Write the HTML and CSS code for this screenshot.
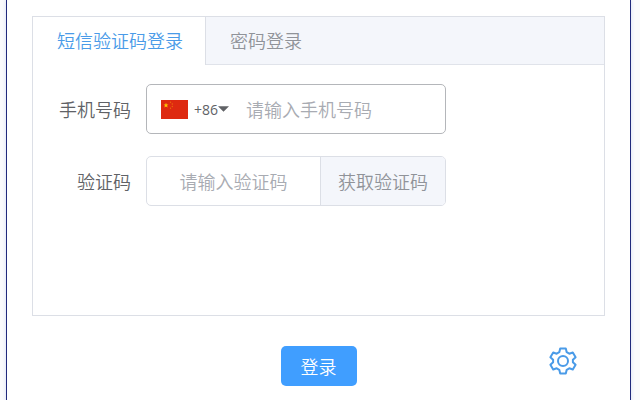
FILE: index.html
```
<!DOCTYPE html>
<html lang="zh-CN">
<head>
  <meta charset="UTF-8" />
  <meta name="viewport" content="width=device-width, initial-scale=1" />
  <title>登录</title>
  <link rel="stylesheet" href="styles.css">
</head>
<body>
  <main class="login-box">
    <section class="tabs">
      <div class="tabs-header" role="tablist">
        <button type="button" class="tab active" role="tab" aria-selected="true">短信验证码登录</button>
        <button type="button" class="tab" role="tab" aria-selected="false">密码登录</button>
      </div>
      <form class="tabs-content" id="loginForm">
        <div class="form-item">
          <label for="phone">手机号码</label>
          <div class="input-group phone-group">
            <button type="button" class="country-btn" aria-label="+86">
              <svg class="flag" viewBox="0 0 27 19">
                <rect width="27" height="19" fill="#de2910" />
                <path fill="#ffc400" d="M5 2.800l.7 1.700h1.800L6.100 5.600l.5 1.800L5 6.400 3.400 7.400l.5-1.800L2.500 4.500h1.800z" />
                <g fill="#ea6a0c">
                  <circle cx="9.500" cy="2.300" r=".7" />
                  <circle cx="11.300" cy="4" r=".7" />
                  <circle cx="11.300" cy="6.500" r=".7" />
                  <circle cx="9.500" cy="8.300" r=".7" />
                </g>
              </svg>
              <span>+86</span>
              <svg class="caret" viewBox="0 0 12 6"><path d="M0 0h12L6 6z" fill="#606266" /></svg>
            </button>
            <input type="tel" id="phone" placeholder="请输入手机号码" />
          </div>
        </div>
        <div class="form-item">
          <label for="code">验证码</label>
          <div class="input-group">
            <input type="text" id="code" class="code-input" placeholder="请输入验证码" />
            <button type="button" class="code-btn">获取验证码</button>
          </div>
        </div>
      </form>
    </section>
    <footer class="login-footer">
      <button type="submit" form="loginForm" class="login-btn">登录</button>
      <button type="button" class="setting-btn" aria-label="设置">
        <svg viewBox="0 0 28 28" fill="none" stroke="#4a9be8" stroke-width="2" stroke-linejoin="round">
          <path d="M11.200 1.500h5.600l.9 3.700 2.600 1.500 3.500-1.200 2.800 4.800-2.700 2.500v2.400l2.700 2.500-2.800 4.800-3.500-1.200-2.600 1.500-.9 3.700h-5.600l-.9-3.700-2.600-1.500-3.500 1.200-2.800-4.800 2.700-2.500v-2.400l-2.700-2.500 2.800-4.800 3.500 1.200 2.600-1.500z" />
          <circle cx="14" cy="14" r="5" />
        </svg>
      </button>
    </footer>
  </main>
</body>
</html>
```
FILE: styles.css
```
* { box-sizing: border-box; }
body {
  margin: 0;
  background: #fafafc;
  color: #606266;
  font-family: 'Noto Sans CJK SC', sans-serif;
  font-size: 18px;
  font-weight: 350;
}
button, input {
  font: inherit;
  color: inherit;
  padding: 0;
  border: none;
  background: none;
}
button { cursor: pointer; }
.login-box {
  min-height: 100vh;
  margin: 0 9px 0 6px;
  padding: 16px 25px;
  background: #fff;
  border: solid #20297c;
  border-width: 0 1px;
  box-shadow: 0 0 4px #d5dcf5;
}

.tabs { border: 1px solid #dcdfe6; }
.tabs-header {
  display: flex;
  height: 48px;
  background: #f4f6fb;
  border-bottom: 1px solid #e0e3ea;
}
.tab {
  height: 48px;
  padding: 0 22px 2px 24px;
  color: #909399;
}
.tab.active {
  color: #4a9be8;
  background: #fff;
  border-right: 1px solid #dcdfe6;
}
.tabs-content {
  min-height: 250px;
  padding: 19px 15px;
}

.form-item {
  display: flex;
  align-items: center;
  margin-bottom: 22px;
}
.form-item label {
  width: 98px;
  padding-right: 15px;
  text-align: right;
  white-space: nowrap;
  flex: none;
}
.input-group {
  display: flex;
  width: 300px;
  height: 50px;
  border: 1px solid #dcdfe6;
  border-radius: 5px;
  overflow: hidden;
}
.phone-group { border-color: #b4b6ba; }
.input-group input {
  flex: 1;
  min-width: 0;
  outline: none;
}
.input-group input::placeholder { color: #a8abb2; opacity: 1; }
.country-btn {
  display: flex;
  align-items: center;
  padding: 0 17px 0 14px;
  font-family: 'Open Sans', sans-serif;
  font-size: 14px;
  font-weight: 400;
}
.flag {
  width: 27px;
  height: 19px;
  margin-right: 6px;
}
.caret {
  width: 11px;
  height: 6px;
}
.code-input { text-align: center; }
.code-btn {
  padding: 0 17px;
  color: #909399;
  background: #f4f6fb;
  border-left: 1px solid #dcdfe6;
}

.login-footer {
  display: grid;
  grid-template-columns: 1fr auto 1fr;
  align-items: center;
  margin-top: 30px;
}
.login-btn {
  grid-column: 2;
  height: 40px;
  padding: 0 20px;
  color: #fff;
  background: #409eff;
  border-radius: 5px;
}
.setting-btn {
  justify-self: end;
  margin: 0 28px 10px 0;
  line-height: 0;
}
.setting-btn svg {
  width: 28px;
  height: 28px;
}
```
